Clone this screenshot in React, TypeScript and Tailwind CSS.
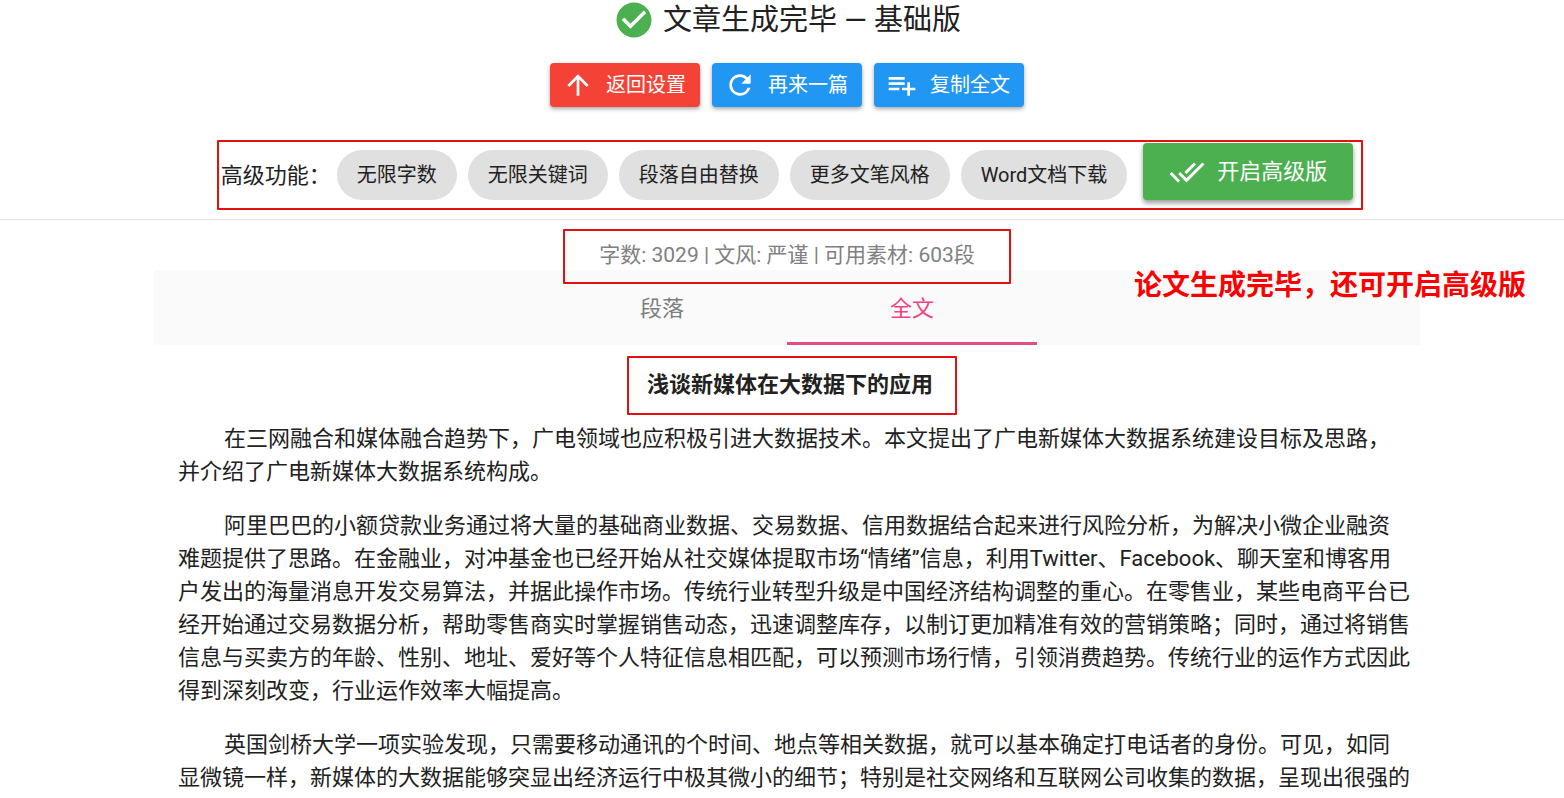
import { useState } from "react"
import { MdArrowUpward, MdCheckCircle, MdDoneAll, MdRefresh } from "react-icons/md"

const features = ["无限字数", "无限关键词", "段落自由替换", "更多文笔风格", "Word文档下载"]

const tabs = ["段落", "全文"]

const paragraphs = [
    "在三网融合和媒体融合趋势下，广电领域也应积极引进大数据技术。本文提出了广电新媒体大数据系统建设目标及思路，并介绍了广电新媒体大数据系统构成。",
    "阿里巴巴的小额贷款业务通过将大量的基础商业数据、交易数据、信用数据结合起来进行风险分析，为解决小微企业融资难题提供了思路。在金融业，对冲基金也已经开始从社交媒体提取市场“情绪”信息，利用Twitter、Facebook、聊天室和博客用户发出的海量消息开发交易算法，并据此操作市场。传统行业转型升级是中国经济结构调整的重心。在零售业，某些电商平台已经开始通过交易数据分析，帮助零售商实时掌握销售动态，迅速调整库存，以制订更加精准有效的营销策略；同时，通过将销售信息与买卖方的年龄、性别、地址、爱好等个人特征信息相匹配，可以预测市场行情，引领消费趋势。传统行业的运作方式因此得到深刻改变，行业运作效率大幅提高。",
    "英国剑桥大学一项实验发现，只需要移动通讯的个时间、地点等相关数据，就可以基本确定打电话者的身份。可见，如同显微镜一样，新媒体的大数据能够突显出经济运行中极其微小的细节；特别是社交网络和互联网公司收集的数据，呈现出很强的",
]

const PlaylistAddIcon = () => (
    <svg viewBox="0 0 24 24" fill="currentColor" className="size-8" aria-hidden="true">
        <path d="M14 10H2v2h12v-2zm0-4H2v2h12V6zm4 8v-4h-2v4h-4v2h4v4h2v-4h4v-2h-4zM2 16h8v-2H2v2z" />
    </svg>
)

// red frame laid over the part it points out
const Frame = ({ className }: { className: string }) => (
    <span className={`pointer-events-none absolute rounded-[1px] border-2 border-[#e60f0f] ${className}`} />
)

const actionClass =
    "flex h-11 w-[150px] items-center gap-3 rounded-sm pl-3 text-xl whitespace-nowrap text-white shadow-[0_2px_4px_rgba(0,0,0,0.35)]"

const Header = () => {
    return (
        <header className="border-b border-[#e0e0e0] pb-3 pl-2.5">
            <h1 className="flex h-10 items-center justify-center gap-2 text-[29px] leading-10">
                <MdCheckCircle className="size-[42px] text-[#4caf50]" />
                文章生成完毕 — 基础版
            </h1>

            <div className="mt-[23px] flex justify-center gap-3">
                <button className={`${actionClass} bg-[#f44336]`}>
                    <MdArrowUpward className="size-8" />
                    返回设置
                </button>
                <button className={`${actionClass} bg-[#2196f3]`}>
                    <MdRefresh className="size-8" />
                    再来一篇
                </button>
                <button className={`${actionClass} bg-[#2196f3]`}>
                    <PlaylistAddIcon />
                    复制全文
                </button>
            </div>

            <div className="mt-9 flex justify-center">
                <div className="relative flex items-center whitespace-nowrap">
                    <span className="mr-1.5 text-[22px]">高级功能：</span>
                    <ul className="flex gap-[11px]">
                        {features.map((feature) => (
                            <li
                                key={feature}
                                className="flex h-[50px] items-center rounded-full bg-[#e0e0e0] px-5 text-xl"
                            >
                                {feature}
                            </li>
                        ))}
                    </ul>
                    <button className="mb-[7px] ml-4 flex h-[57px] items-center gap-3 rounded-sm bg-[#4caf50] px-[26px] text-[22px] text-white shadow-[0_3px_5px_rgba(0,0,0,0.4)]">
                        <MdDoneAll className="size-9" />
                        开启高级版
                    </button>
                    <Frame className="-top-[3px] -right-2.5 -bottom-[3px] -left-1" />
                </div>
            </div>
        </header>
    )
}

const Article = () => {
    return (
        <article className="pt-[23px] pr-2.5 pl-6 text-[22px] leading-[33px]">
            <div className="flex justify-center pr-2">
                <h2 className="relative font-bold">
                    浅谈新媒体在大数据下的应用
                    <Frame className="-top-3 -right-6 -bottom-3.5 -left-5" />
                </h2>
            </div>
            {paragraphs.map((text) => (
                <p key={text} className="mt-[21px] indent-[46px]">
                    {text}
                </p>
            ))}
        </article>
    )
}

const App = () => {
    const [active, setActive] = useState("全文")

    return (
        <div
            lang="zh-CN"
            className="bg-white font-['Roboto','Noto_Sans_CJK_SC',sans-serif] text-[#212121]"
        >
            <Header />
            <main className="relative pr-36 pl-[154px]">
                <div className="flex justify-center pt-5">
                    <p className="relative z-10 text-[21px] leading-[30px] text-[#808080]">
                        字数: 3029 | 文风: 严谨 | 可用素材: 603段
                        <Frame className="-inset-x-9 -top-[11px] -bottom-3.5" />
                    </p>
                </div>
                <div role="tablist" className="flex h-[75px] justify-center bg-[#fafafa]">
                    {tabs.map((tab) => (
                        <button
                            key={tab}
                            role="tab"
                            aria-selected={tab === active}
                            onClick={() => setActive(tab)}
                            className={`w-[250px] border-b-[3px] pt-1 text-[22px] ${
                                tab === active
                                    ? "border-[#e14d84] text-[#f0437f]"
                                    : "border-transparent text-[#7d7d7d]"
                            }`}
                        >
                            {tab}
                        </button>
                    ))}
                </div>
                <Article />
                <strong className="absolute top-[46px] right-[38px] text-[28px] leading-10 font-bold whitespace-nowrap text-[#fb0000]">
                    论文生成完毕，还可开启高级版
                </strong>
            </main>
        </div>
    )
}

export default App
